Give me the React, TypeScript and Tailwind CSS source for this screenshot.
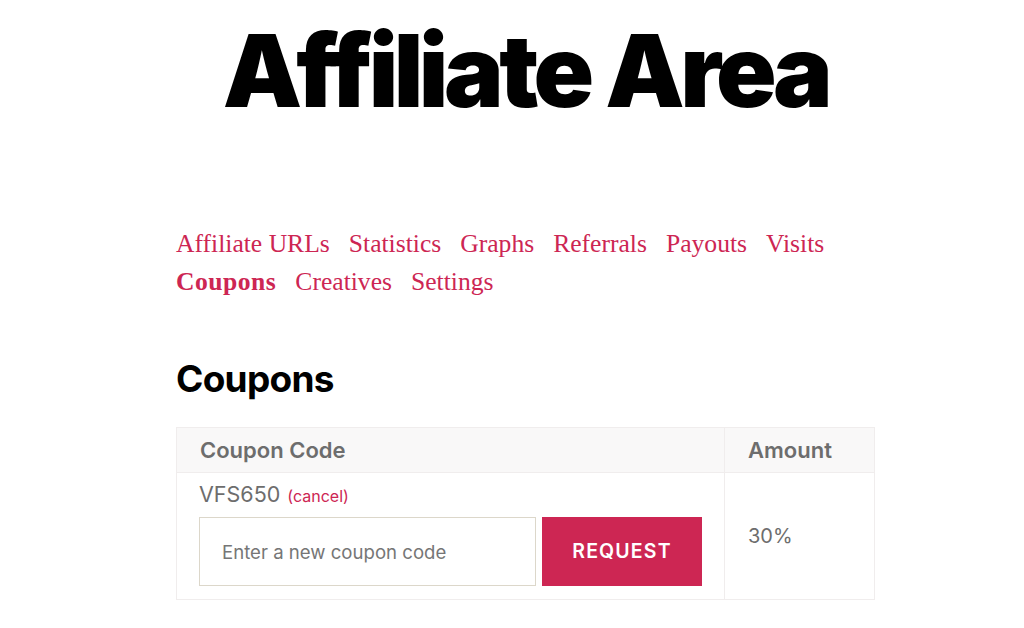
const navItems = [
  "Affiliate URLs",
  "Statistics",
  "Graphs",
  "Referrals",
  "Payouts",
  "Visits",
  "Coupons",
  "Creatives",
  "Settings",
];

export default function App() {
  return (
    <div className="min-h-[628px] bg-white font-['Inter',sans-serif]">
      <div className="ml-[176px] w-[699px]">
        <h1 className="pt-[21px] text-center text-[100px] font-black leading-none tracking-[-0.045em] text-black">
          Affiliate Area
        </h1>

        <nav className="mt-[104px] flex flex-wrap gap-x-[19px] font-['Liberation_Serif',serif] text-[25.6px] leading-[38px] text-[#cd2653]">
          {navItems.map((item) => (
            <a
              key={item}
              href="#"
              className={item === "Coupons" ? "font-bold tracking-[0.02em]" : ""}
            >
              {item}
            </a>
          ))}
        </nav>

        <h2 className="mt-[59px] text-[37px] font-bold leading-none tracking-[-0.02em] text-black">
          Coupons
        </h2>

        <table className="mt-[30px] w-full border-collapse border border-[#f0eded] text-[20px]">
          <thead>
            <tr className="bg-[#f9f8f8]">
              <th className="h-[45px] border border-[#f0eded] px-[23px] text-left text-[22px] font-semibold text-[#6d6d6d]">
                Coupon Code
              </th>
              <th className="w-[151px] border border-[#f0eded] px-[23px] text-left text-[22px] font-semibold text-[#6d6d6d]">
                Amount
              </th>
            </tr>
          </thead>
          <tbody>
            <tr>
              <td className="border border-[#f0eded] px-[22px] pb-[13px] pt-[9px] align-top">
                <div className="flex h-[24px] items-baseline gap-[7px] leading-[24px] text-[#6d6d6d]">
                  <span className="text-[21.5px]">VFS650</span>
                  <a href="#" className="text-[16px] text-[#cd2653]">
                    (cancel)
                  </a>
                </div>
                <div className="mt-[11px] flex gap-[6px]">
                  <input
                    type="text"
                    placeholder="Enter a new coupon code"
                    className="h-[69px] w-[337px] border border-[#dcd7ca] px-[22px] text-[18.6px] text-[#6d6d6d] placeholder:text-[#767676] outline-none"
                  />
                  <button className="h-[69px] w-[160px] bg-[#cd2653] text-[19.5px] font-semibold tracking-[0.06em] text-white">
                    REQUEST
                  </button>
                </div>
              </td>
              <td className="border border-[#f0eded] px-[23px] align-middle text-[#6d6d6d]">
                30%
              </td>
            </tr>
          </tbody>
        </table>
      </div>
    </div>
  );
}
